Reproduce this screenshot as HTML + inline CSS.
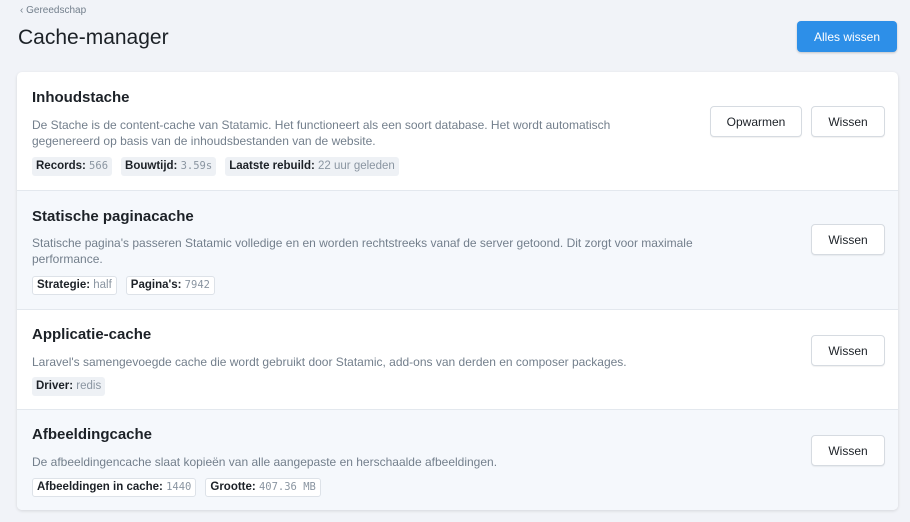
<!DOCTYPE html>
<html><head><meta charset="utf-8"><style>
*{box-sizing:border-box;margin:0;padding:0}
body{width:910px;height:522px;background:#f1f3f8;font-family:"Liberation Sans",sans-serif;position:relative;overflow:hidden;color:#1c2127}
.bc{position:absolute;left:20px;top:5px;font-size:10px;color:#737f8c}
h1{position:absolute;left:18px;top:26px;font-size:21px;font-weight:400;color:#1c2127}
.blue{position:absolute;left:797px;top:21px;width:100px;height:31px;background:#2d8fe8;color:#fff;border-radius:4px;font-size:12px;display:flex;align-items:center;justify-content:center;box-shadow:0 1px 2px rgba(0,0,0,.2)}
.card{position:absolute;left:17px;top:72px;width:881px;height:438px;background:#fff;border-radius:5px;box-shadow:0 1px 3px rgba(0,0,0,.12);overflow:hidden}
.sec{position:absolute;left:0;width:881px;border-top:1px solid #e3e8ee}
.sec.l{background:#f5f8fc}
.t{position:absolute;left:15px;font-size:15px;font-weight:700;color:#1c2127}
.d{position:absolute;left:15px;font-size:12px;color:#737f8c;line-height:16px;width:700px}
.bs{position:absolute;left:15px;display:flex;gap:9px}
.b{font-size:11.5px;padding:0 4px;height:19px;line-height:19px;background:#eef1f5;border-radius:3px;color:#1c2127;font-weight:600}
.l .b{background:#fff;border:1px solid #dde2e8;line-height:17px}
.b span{font-weight:400;color:#8a95a1}
.b span.m{font-family:"DejaVu Sans Mono","Liberation Mono",monospace;font-size:10.5px}
.btn{position:absolute;height:31px;background:#fff;border:1px solid #d6dbe1;border-radius:4px;font-size:12px;color:#1c2127;display:flex;align-items:center;justify-content:center;box-shadow:0 1px 1px rgba(0,0,0,.06)}
</style></head><body>
<div class="bc">‹ Gereedschap</div>
<h1>Cache-manager</h1>
<div class="blue">Alles wissen</div>
<div class="card">
<div class="sec" style="top:0;height:118px;border-top:0">
<div class="t" style="top:17px">Inhoudstache</div>
<div class="d" style="top:45px;width:640px">De Stache is de content-cache van Statamic. Het functioneert als een soort database. Het wordt automatisch gegenereerd op basis van de inhoudsbestanden van de website.</div>
<div class="bs" style="top:85px"><div class="b">Records: <span class="m">566</span></div><div class="b">Bouwtijd: <span class="m">3.59s</span></div><div class="b">Laatste rebuild: <span>22 uur geleden</span></div></div>
<div class="btn" style="left:693px;top:34px;width:92px">Opwarmen</div>
<div class="btn" style="left:794px;top:34px;width:74px">Wissen</div>
</div>
<div class="sec l" style="top:118px;height:119px">
<div class="t" style="top:17px">Statische paginacache</div>
<div class="d" style="top:44px">Statische pagina's passeren Statamic volledige en en worden rechtstreeks vanaf de server getoond. Dit zorgt voor maximale performance.</div>
<div class="bs" style="top:85px"><div class="b">Strategie: <span>half</span></div><div class="b">Pagina's: <span class="m">7942</span></div></div>
<div class="btn" style="left:794px;top:33px;width:74px">Wissen</div>
</div>
<div class="sec" style="top:237px;height:100px">
<div class="t" style="top:16px">Applicatie-cache</div>
<div class="d" style="top:44px">Laravel's samengevoegde cache die wordt gebruikt door Statamic, add-ons van derden en composer packages.</div>
<div class="bs" style="top:67px"><div class="b">Driver: <span>redis</span></div></div>
<div class="btn" style="left:794px;top:25px;width:74px">Wissen</div>
</div>
<div class="sec l" style="top:337px;height:101px">
<div class="t" style="top:16px">Afbeeldingcache</div>
<div class="d" style="top:44px">De afbeeldingencache slaat kopieën van alle aangepaste en herschaalde afbeeldingen.</div>
<div class="bs" style="top:68px"><div class="b">Afbeeldingen in cache: <span class="m">1440</span></div><div class="b">Grootte: <span class="m">407.36 MB</span></div></div>
<div class="btn" style="left:794px;top:25px;width:74px">Wissen</div>
</div>
</div>
</body></html>
